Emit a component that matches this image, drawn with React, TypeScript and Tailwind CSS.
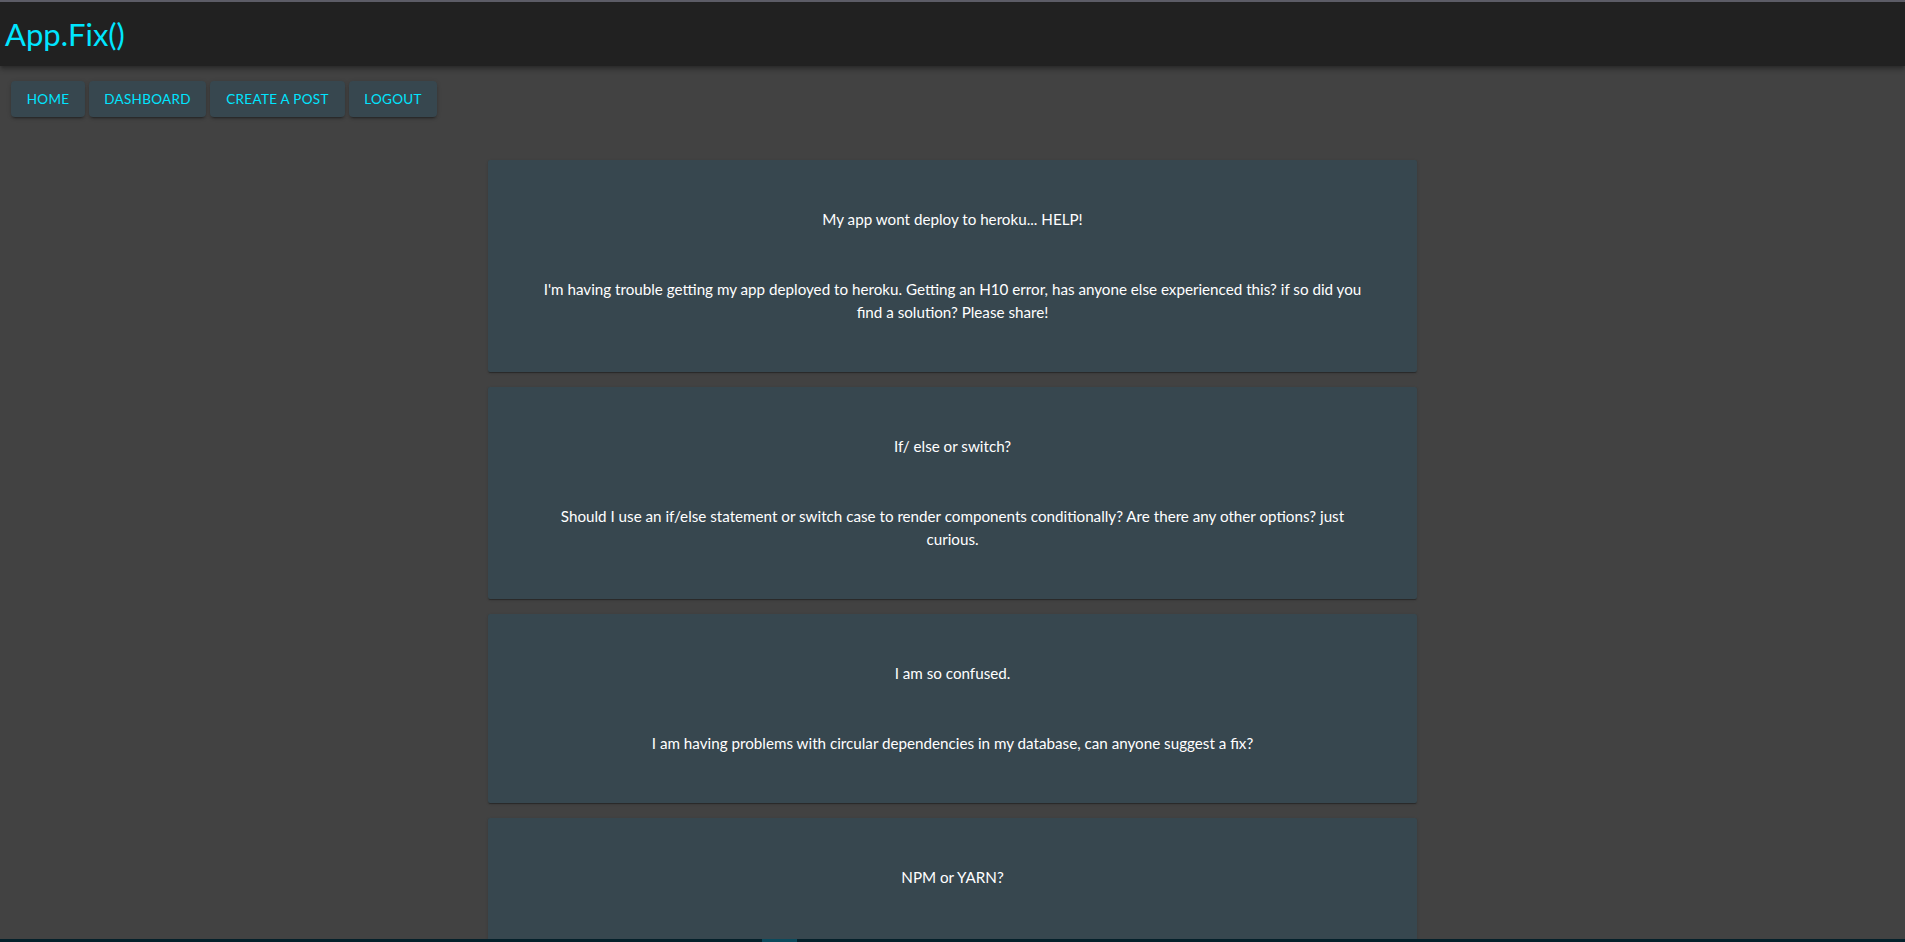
import React from "react";

const posts = [
  {
    title: "My app wont deploy to heroku... HELP!",
    body: "I'm having trouble getting my app deployed to heroku. Getting an H10 error, has anyone else experienced this? if so did you find a solution? Please share!",
  },
  {
    title: "If/ else or switch?",
    body: "Should I use an if/else statement or switch case to render components conditionally? Are there any other options? just curious.",
  },
  {
    title: "I am so confused.",
    body: "I am having problems with circular dependencies in my database, can anyone suggest a fix?",
  },
  {
    title: "NPM or YARN?",
    body: "Which package manager do you prefer to use for your projects and why?",
  },
];

const navItems = [
  { label: "HOME", w: "w-[74px]" },
  { label: "DASHBOARD", w: "w-[117px]" },
  { label: "CREATE A POST", w: "w-[135px]" },
  { label: "LOGOUT", w: "w-[88px]" },
];

export default function App() {
  return (
    <div
      className="min-h-screen bg-[#424242] text-white"
      style={{ fontFamily: "Lato, 'Noto Sans', Arial, sans-serif" }}
    >
      <header className="border-t-2 border-[#5c5c66] bg-[#212121] shadow-[0_2px_4px_-1px_rgba(0,0,0,0.3),0_4px_5px_0_rgba(0,0,0,0.2)]">
        <div className="flex h-[64px] items-center px-[5px] pt-[1px]">
          <h1 className="text-[31px] leading-none font-normal text-[#00e5ff]">
            App.Fix()
          </h1>
        </div>
      </header>

      <nav className="mt-[15px] flex gap-[4px] pl-[11px]">
        {navItems.map((item) => (
          <button
            key={item.label}
            className={`${item.w} h-[36px] rounded-[4px] bg-[#37474f] text-[13.5px] tracking-[0.3px] text-[#00e5ff] shadow-[0_3px_1px_-2px_rgba(0,0,0,0.2),0_2px_2px_0_rgba(0,0,0,0.14),0_1px_5px_0_rgba(0,0,0,0.12)]`}
          >
            {item.label}
          </button>
        ))}
      </nav>

      <main className="mt-[43px] flex flex-col items-center gap-[15px] pb-10">
        {posts.map((p) => (
          <div
            key={p.title}
            className="w-[929px] rounded-[2px] bg-[#37474f] px-[50px] py-[48px] text-center text-[15.2px] leading-[23px] shadow-[0_2px_1px_-1px_rgba(0,0,0,0.2),0_1px_1px_0_rgba(0,0,0,0.14),0_1px_3px_0_rgba(0,0,0,0.12)]"
          >
            <p>{p.title}</p>
            <p className="mt-[47px]">{p.body}</p>
          </div>
        ))}
      </main>

      <div className="pointer-events-none fixed bottom-0 left-0 right-0 flex h-[3px] bg-[#04202a]">
        <div className="ml-[762px] h-full w-[35px] bg-[#0b4a5c]" />
      </div>
    </div>
  );
}
